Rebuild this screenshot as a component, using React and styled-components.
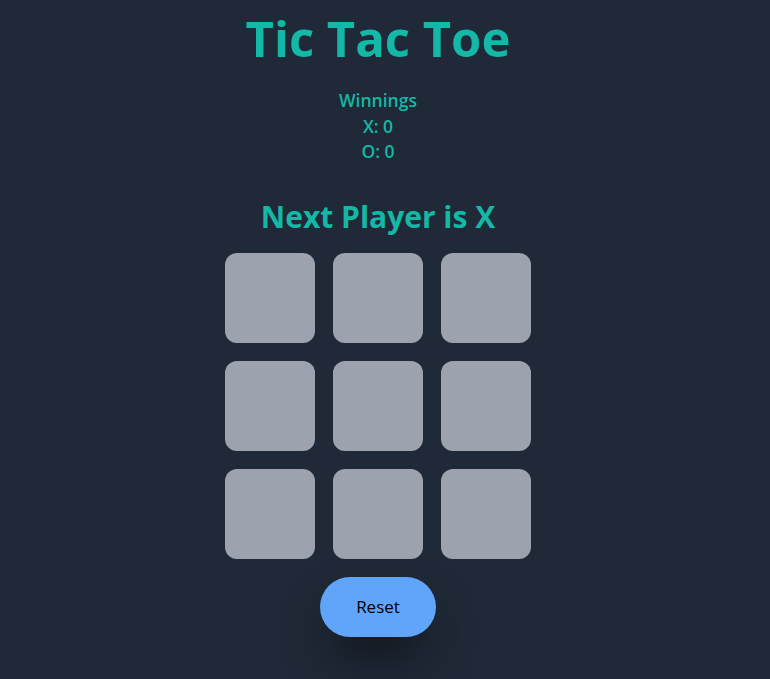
import React, { useState } from "react";
import styled, { createGlobalStyle } from "styled-components";

const GlobalStyle = createGlobalStyle`
  html, body {
    margin: 0;
    padding: 0;
    background: #1f2937;
    font-family: "Open Sans", "Noto Sans", sans-serif;
  }
`;

const Page = styled.main`
  width: calc(100% - 14px);
  min-height: 679px;
  display: flex;
  flex-direction: column;
  align-items: center;
  color: #14b8a6;
`;

const Title = styled.h1`
  margin: 6px 0 0;
  font-size: 49px;
  line-height: 64px;
  font-weight: 700;
`;

const Score = styled.div`
  margin-top: 18px;
  display: flex;
  flex-direction: column;
  align-items: center;
  font-size: 17.5px;
  font-weight: 600;
  line-height: 25.5px;
`;

const Status = styled.h2`
  margin: 32px 0 0;
  font-size: 30px;
  line-height: 40px;
  font-weight: 700;
`;

const Board = styled.div`
  margin-top: 16px;
  display: grid;
  grid-template-columns: repeat(3, 90px);
  grid-auto-rows: 90px;
  gap: 18px;
`;

const Square = styled.button`
  border: none;
  padding: 0;
  border-radius: 12px;
  background: #9ca3af;
  color: #1f2937;
  font-family: inherit;
  font-size: 40px;
  font-weight: 700;
  cursor: pointer;
`;

const ResetButton = styled.button`
  margin-top: 18px;
  width: 116px;
  height: 60px;
  border: none;
  border-radius: 9999px;
  background: #60a5fa;
  color: #000;
  font-family: inherit;
  font-size: 17px;
  box-shadow: 0 25px 50px -12px rgba(0, 0, 0, 0.65);
  cursor: pointer;
`;

const winner = (cells) => {
  const lines = [
    [0, 1, 2], [3, 4, 5], [6, 7, 8],
    [0, 3, 6], [1, 4, 7], [2, 5, 8],
    [0, 4, 8], [2, 4, 6],
  ];
  for (const [a, b, c] of lines) {
    if (cells[a] && cells[a] === cells[b] && cells[a] === cells[c]) return cells[a];
  }
  return null;
};

const App = () => {
  const [cells, setCells] = useState(Array(9).fill(null));
  const [xNext, setXNext] = useState(true);
  const [wins, setWins] = useState({ X: 0, O: 0 });

  const won = winner(cells);

  const play = (i) => {
    if (cells[i] || won) return;
    const next = cells.slice();
    next[i] = xNext ? "X" : "O";
    setCells(next);
    setXNext(!xNext);
    const w = winner(next);
    if (w) setWins({ ...wins, [w]: wins[w] + 1 });
  };

  const reset = () => {
    setCells(Array(9).fill(null));
    setXNext(true);
  };

  return (
    <>
      <GlobalStyle />
      <Page>
        <Title>Tic Tac Toe</Title>
        <Score>
          <span>Winnings</span>
          <span>X: {wins.X}</span>
          <span>O: {wins.O}</span>
        </Score>
        <Status>{won ? `Winner is ${won}` : `Next Player is ${xNext ? "X" : "O"}`}</Status>
        <Board>
          {cells.map((cell, i) => (
            <Square key={i} onClick={() => play(i)}>
              {cell}
            </Square>
          ))}
        </Board>
        <ResetButton onClick={reset}>Reset</ResetButton>
      </Page>
    </>
  );
};

export default App;
